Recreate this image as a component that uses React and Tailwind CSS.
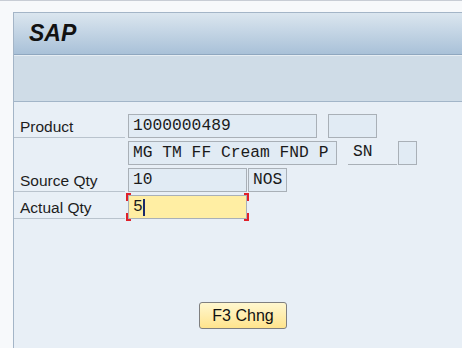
import React from "react";

const mono = { fontFamily: '"Liberation Mono", "Courier New", monospace' };

function Label({ children }) {
  return (
    <div className="w-[111px] h-[24px] mr-[3px] border-b border-[#b9c3cd] pl-[6px] flex items-end text-[15.5px] leading-[21px] text-[#1d1d1d] font-['Liberation_Sans',Arial,sans-serif]">
      {children}
    </div>
  );
}

function Box({ w, children, className = "" }) {
  return (
    <div
      className={`h-[24px] border border-[#a9b0b7] bg-[#e1ebf4] px-[4px] flex items-center text-[16.3px] text-[#1a1a1a] whitespace-pre ${className}`}
      style={{ ...mono, width: w }}
    >
      {children}
    </div>
  );
}

export default function App() {
  return (
    <div className="w-[462px] h-[348px] bg-[#f7f9fb] border-t border-[#c8cdd5] pt-[11px] pl-[13px] overflow-hidden">
      <div className="h-full border-l border-t border-[#a4b5c7] bg-[#e8eff6] flex flex-col">
        {/* title bar */}
        <div className="h-[42px] bg-gradient-to-b from-[#dbe6ef] to-[#a9c1d8] border-b border-[#8fa7bf] flex items-center pl-[15px]">
          <span className="text-[23px] font-bold italic text-[#111] font-['Liberation_Sans',Arial,sans-serif]">SAP</span>
        </div>
        {/* toolbar */}
        <div className="h-[47px] bg-[#cfdce7] border-t border-[#e6edf3] border-b border-b-[#a2b5c8]" />
        {/* screen body */}
        <div className="flex-1 pt-[12px] flex flex-col gap-[3px]">
          <div className="flex items-end">
            <Label>Product</Label>
            <Box w="189px">1000000489</Box>
            <Box w="49px" className="ml-[11px]" />
          </div>
          <div className="flex items-end">
            <div className="w-[114px]" />
            <Box w="209px">MG TM FF Cream FND P</Box>
            <div className="ml-[11px] w-[49px] h-[24px] border-b border-[#a9b0b7] pl-[5px] flex items-center text-[16.3px] text-[#1a1a1a]" style={mono}>SN</div>
            <Box w="19px" className="ml-[1px]" />
          </div>
          <div className="flex items-end">
            <Label>Source Qty</Label>
            <Box w="119px">10</Box>
            <Box w="39px" className="ml-[1px] px-[3px]">NOS</Box>
          </div>
          <div className="flex items-end">
            <Label>Actual Qty</Label>
            <div className="relative">
              <Box w="119px" className="bg-[#ffeea3]">
                5<span className="inline-block w-[2px] h-[17px] bg-[#1a2a6a]" />
              </Box>
              <span className="absolute -left-[2px] -top-[2px] w-[5px] h-[8px] border-l-2 border-t-2 border-[#e0202a]" />
              <span className="absolute -left-[2px] -bottom-[2px] w-[5px] h-[8px] border-l-2 border-b-2 border-[#e0202a]" />
              <span className="absolute -right-[2px] -top-[2px] w-[5px] h-[8px] border-r-2 border-t-2 border-[#e0202a]" />
              <span className="absolute -right-[2px] -bottom-[2px] w-[5px] h-[8px] border-r-2 border-b-2 border-[#e0202a]" />
            </div>
          </div>
          <div className="flex mt-[80px] pl-[185px]">
            <button className="w-[88px] h-[27px] rounded-[3px] border border-[#7f7f7f] bg-gradient-to-b from-[#fff7cf] to-[#ffe48c] text-[16px] text-[#111] font-['Liberation_Sans',Arial,sans-serif] leading-none">
              F3 Chng
            </button>
          </div>
        </div>
      </div>
    </div>
  );
}
